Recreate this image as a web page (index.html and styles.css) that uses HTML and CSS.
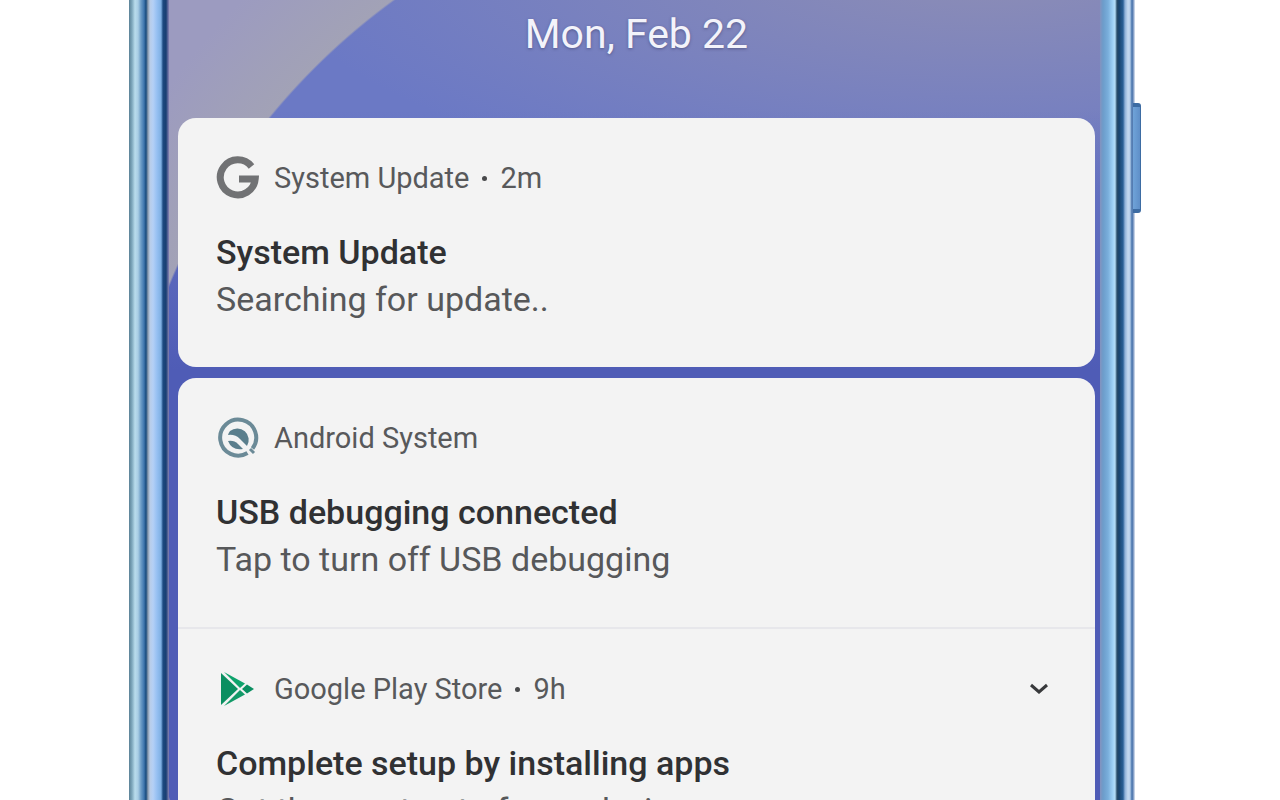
FILE: index.html
```html
<!DOCTYPE html>
<html lang="en">
<head>
    <meta charset="UTF-8">
    <meta name="viewport" content="width=device-width, initial-scale=1.0">
    <title>Notifications</title>
    <link rel="stylesheet" href="styles.css">
</head>
<body>
    <div class="phone">
        <div class="rail rail-left"></div>

        <main class="screen">
            <div class="date">Mon, Feb 22</div>

            <section class="group">
                <article class="notification">
                    <header class="app">
                        <svg class="icon" viewBox="0 0 44 44" aria-hidden="true">
                            <path d="M35.5 10.5A17.5 17.5 0 1 0 39.2 23H23" fill="none" stroke="#717274" stroke-width="7"/>
                        </svg>
                        <span>System Update</span>
                        <span class="dot"></span>
                        <span>2m</span>
                    </header>
                    <h2>System Update</h2>
                    <p>Searching for update..</p>
                </article>
            </section>

            <section class="group">
                <article class="notification">
                    <header class="app">
                        <svg class="icon" viewBox="0 0 44 44" aria-hidden="true">
                            <path d="M31.500 37A18 18 0 1 1 36.500 32.500" fill="none" stroke="#6b8a97" stroke-width="4"/>
                            <path d="M34 33l4 4" stroke="#6b8a97" stroke-width="3"/>
                            <path d="M14 15A11.500 11.500 0 0 1 31 30L24 23Q19 18 12 19Q12.500 17 14 15Z" fill="#5a7e8c"/>
                            <path d="M12 25Q18 24 22 28L27 33Q16 35 12 25Z" fill="#5a7e8c"/>
                        </svg>
                        <span>Android System</span>
                    </header>
                    <h2>USB debugging connected</h2>
                    <p>Tap to turn off USB debugging</p>
                </article>

                <article class="notification">
                    <header class="app">
                        <svg class="icon" viewBox="0 0 44 44" aria-hidden="true">
                            <path d="M5 6L22 22L5 38Z" fill="#0b8f61"/>
                            <path d="M8 5L29 16.500L24 21Z" fill="#0fa36c"/>
                            <path d="M8 39L29 27.500L24 23Z" fill="#139a68"/>
                            <path d="M31 17.500L38 22L31 26.500L26 22Z" fill="#0b8f61"/>
                        </svg>
                        <span>Google Play Store</span>
                        <span class="dot"></span>
                        <span>9h</span>
                        <button class="expand" type="button" aria-label="Expand">
                            <svg viewBox="0 0 20 12" aria-hidden="true">
                                <path d="M2 2L10 9L18 2" fill="none" stroke="#38393b" stroke-width="3"/>
                            </svg>
                        </button>
                    </header>
                    <h2>Complete setup by installing apps</h2>
                    <p>Get the most out of your device</p>
                </article>
            </section>
        </main>

        <div class="rail rail-right"></div>
        <div class="power"></div>
    </div>
</body>
</html>
```

FILE: styles.css
```css
body {
    margin: 0;
    height: 100vh;
    overflow: hidden;
    background: #fff;
    font-family: Roboto, "Open Sans", sans-serif;
}

.phone {
    position: relative;
    display: flex;
    min-height: 100vh;
    margin: 0 145px 0 129px;
}

/* metal frame */
.rail {
    flex: none;
}

.rail-left {
    width: 40px;
    background: linear-gradient(to right,
        #5b8196 0, #7fa8bd 3px, #b9dcec 6px, #a9cde4 9px, #6c9cc6 12px,
        #3f76ae 15px, #174a7c 17px, #8c9bad 19px, #b9cde8 21px, #b4d0f6 24px,
        #96c0f2 28px, #7fb0e3 32px, #1d4a80 34px, #183e72 37px, #8a83b4 40px);
}

.rail-right {
    width: 35px;
    background: linear-gradient(to right,
        #8492bf 0, #6c9cca 3px, #79aedb 8px, #a0d3f7 13px, #b4def8 15px,
        #294c68 17px, #17446f 19px, #285f96 23px, #8db0d8 25px, #c3d9f0 28px,
        #b4cde9 30px, #416fa9 32px, #6889b9 33px, #e3e9f3 35px);
}

.power {
    position: absolute;
    top: 103px;
    right: -6px;
    width: 8px;
    height: 110px;
    box-sizing: border-box;
    background: linear-gradient(to right, #6fa3d8, #5f8fc8);
    border: solid #3d6ca3;
    border-width: 4px 1px 4px 0;
    border-radius: 0 3px 3px 0;
}

.screen {
    flex: 1;
    display: flex;
    flex-direction: column;
    gap: 11px;
    padding: 0 5px 0 9px;
    background:
        radial-gradient(circle at 619px 542px, transparent 669px, #a2a2b6 671px, #9c9bc0 770px),
        linear-gradient(to bottom, transparent 110px, #4f5cb6 370px),
        radial-gradient(ellipse 720px 240px at 820px -40px, #8e8eb5, transparent),
        #6b79c5;
}

.date {
    height: 107px;
    padding-top: 10px;
    box-sizing: border-box;
    margin-bottom: 0;
    color: #f3f3fa;
    font-size: 41px;
    line-height: 48px;
    text-align: center;
    text-shadow: 0 1px 3px rgba(50, 50, 90, 0.5);
}

.group {
    border-radius: 18px;
    background: #f3f3f3;
}

.group:last-child {
    margin-bottom: -80px;
}

.notification {
    padding: 38px 38px 44px;
}

.notification + .notification {
    border-top: 2px solid #e7e7eb;
}

.app {
    display: flex;
    align-items: center;
    height: 44px;
    margin-bottom: 29px;
    color: #58595b;
    font-size: 29px;
}

.icon {
    width: 44px;
    height: 44px;
    margin-right: 14px;
}

.dot {
    width: 5px;
    height: 5px;
    margin: 0 13px;
    border-radius: 50%;
    background: #48494b;
}

.expand {
    width: 36px;
    height: 36px;
    margin-left: auto;
    padding: 8px;
    border: 0;
    background: none;
    cursor: pointer;
}

.expand svg {
    display: block;
    width: 20px;
    height: 12px;
}

h2,
p {
    margin: 0;
    font-size: 34px;
    line-height: 47px;
    white-space: nowrap;
}

h2 {
    color: #303133;
    font-weight: 500;
}

p {
    color: #57585a;
}
```
